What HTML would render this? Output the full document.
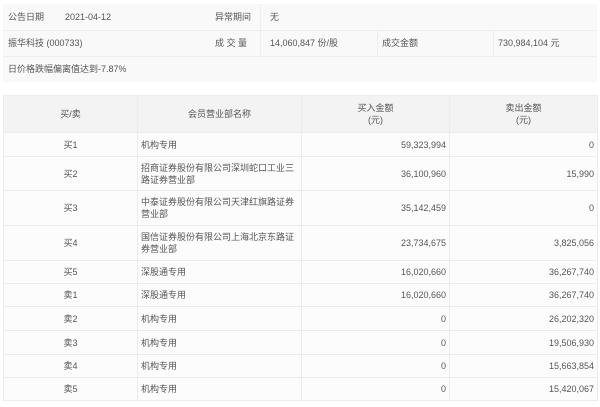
<!DOCTYPE html>
<html><head><meta charset="utf-8"><style>
body{margin:0;width:600px;height:407px;background:#fff;font-family:"Liberation Sans","Noto Sans CJK SC",sans-serif;font-size:9px;color:#555;position:relative;overflow:hidden}
.box{position:absolute;left:3px;top:4px;width:594px;height:78px;background:#f9f9f9}
.r{position:absolute;left:0;width:594px;height:26px;border-bottom:1px solid #eee}
.t{position:absolute;line-height:26px;white-space:nowrap}
.vl{position:absolute;top:0;width:1px;height:26px;background:#eee}
table{position:absolute;left:3px;top:95px;width:594px;border-collapse:collapse;table-layout:fixed}
td,th{border:1px solid #ececec;padding:0 3px;font-weight:normal;line-height:12px}
th{background:#f3f3f3;height:36px;text-align:center}
td{background:#fcfcfc}
td.c{text-align:center}td.n{text-align:right}
</style></head><body>
<div class="box">
<div class="r" style="top:0"><span class="t" style="left:5px">公告日期</span><span class="t" style="left:62px">2021-04-12</span><span class="t" style="left:212px">异常期间</span><span class="t" style="left:267px">无</span><div class="vl" style="left:257px"></div></div>
<div class="r" style="top:26px"><span class="t" style="left:5px">振华科技 (000733)</span><span class="t" style="left:212px">成 交 量</span><span class="t" style="left:267px">14,060,847 份/股</span><span class="t" style="left:379px">成交金额</span><span class="t" style="left:495px">730,984,104 元</span><div class="vl" style="left:257px"></div><div class="vl" style="left:374px"></div><div class="vl" style="left:490px"></div></div>
<div class="r" style="top:52px;border:0"><span class="t" style="left:5px">日价格跌幅偏离值达到-7.87%</span></div>
</div>
<table>
<colgroup><col style="width:134px"><col style="width:164px"><col style="width:148px"><col style="width:148px"></colgroup>
<tr><th>买/卖</th><th>会员营业部名称</th><th>买入金额<br>(元)</th><th>卖出金额<br>(元)</th></tr>
<tr style="height:24px"><td class="c">买1</td><td>机构专用</td><td class="n">59,323,994</td><td class="n">0</td></tr>
<tr style="height:34px"><td class="c">买2</td><td>招商证券股份有限公司深圳蛇口工业三路证券营业部</td><td class="n">36,100,960</td><td class="n">15,990</td></tr>
<tr style="height:35px"><td class="c">买3</td><td>中泰证券股份有限公司天津红旗路证券营业部</td><td class="n">35,142,459</td><td class="n">0</td></tr>
<tr style="height:35px"><td class="c">买4</td><td>国信证券股份有限公司上海北京东路证券营业部</td><td class="n">23,734,675</td><td class="n">3,825,056</td></tr>
<tr style="height:23px"><td class="c">买5</td><td>深股通专用</td><td class="n">16,020,660</td><td class="n">36,267,740</td></tr>
<tr style="height:23px"><td class="c">卖1</td><td>深股通专用</td><td class="n">16,020,660</td><td class="n">36,267,740</td></tr>
<tr style="height:24px"><td class="c">卖2</td><td>机构专用</td><td class="n">0</td><td class="n">26,202,320</td></tr>
<tr style="height:24px"><td class="c">卖3</td><td>机构专用</td><td class="n">0</td><td class="n">19,506,930</td></tr>
<tr style="height:23px"><td class="c">卖4</td><td>机构专用</td><td class="n">0</td><td class="n">15,663,854</td></tr>
<tr style="height:23px"><td class="c">卖5</td><td>机构专用</td><td class="n">0</td><td class="n">15,420,067</td></tr>
</table>
</body></html>
